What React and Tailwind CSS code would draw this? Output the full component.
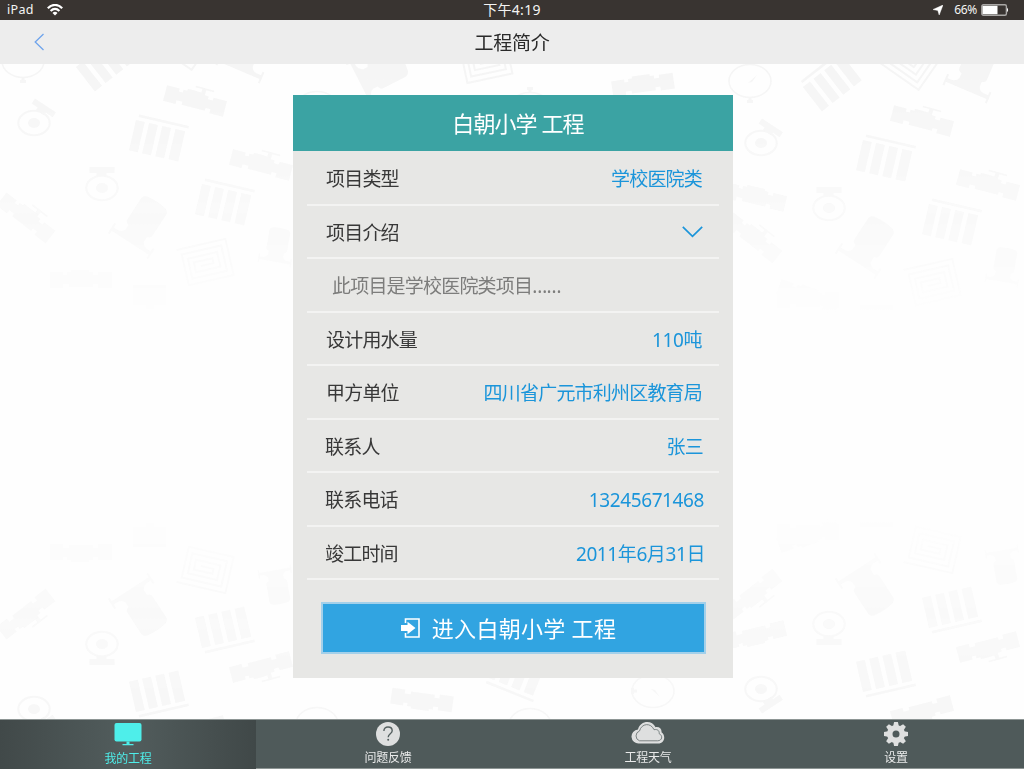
import React from "react";

const FONT = "font-['Noto_Sans','Noto_Sans_CJK_SC',sans-serif]";

/* ---------- background doodles ---------- */
const Valve = ({ t, handle = true }) => (
  <g transform={t}>
    <path d="M-31-8h13v3h4v-3h4v-2h18v2h4v3h5v-3h14v16H17v-4h-5v3H-12v-3h-6v4h-13z" />
    {handle && <path d="M-3-15h19v1.600H8v4H4v-4h-7z" />}
  </g>
);
const Bars = ({ t }) => (
  <g transform={t}>
    <path d="M-22-21h51v2.600h-51zM-24-15h9v31h-9zM-10.500-15h9v31h-9zM3-15h9v31H3zM16.500-15h10v31h-10z" />
  </g>
);
const Camera = ({ t, rot = 0 }) => (
  <g transform={t}>
    <ellipse rx="15.700" ry="12.200" fill="none" stroke="currentColor" strokeWidth="2" />
    <ellipse rx="6" ry="5" />
    <g transform={`rotate(${rot})`}>
      <path d="M-12.500-21h25v6h-8v3h-10v-3h-7z" />
    </g>
  </g>
);
const Gauge = ({ t, rot = 0 }) => (
  <g transform={t}>
    <ellipse rx="21" ry="16.500" fill="none" stroke="currentColor" strokeWidth="1.600" />
    <path d="M-2 2 7-6 2 1z" />
    <path transform={`rotate(${rot})`} d="M-1.500 16h3v3h1.500v3h-6v-3h1.500z" />
  </g>
);
const Spiral = ({ t }) => (
  <g transform={t}>
    <path
      d="M-25-18H25V19H-21V-12.500H19.500V13.500H-16V-7H14V8H-11V-2H8V3H-5"
      fill="none"
      stroke="currentColor"
      strokeWidth="2"
    />
  </g>
);
const Flask = ({ t }) => (
  <g transform={t}>
    <path d="M-15-24q1-3 4-4 11-2 22 0 3 1 4 4V2q0 3-4 4v5q1 4 6 5h5v-4h2v12h-2v-4h-44v4h-2V12h2v4h5q5-1 6-5V6q-4-1-4-4z" />
  </g>
);

function Tile() {
  return (
    <>
      <Gauge t="translate(23 61)" />
      <Bars t="translate(104 64) rotate(-38)" />
      <Spiral t="translate(182 40) rotate(35)" />
      <Flask t="translate(247 52) rotate(23)" />
      <Valve t="translate(195 101) rotate(15)" />
      <Camera t="translate(34 123)" rot={33} />
      <Bars t="translate(156 140) rotate(13)" />
      <Valve t="translate(261 165) rotate(15)" />
      <Camera t="translate(102 188)" />
      <Bars t="translate(222 204) rotate(13)" />
      <Valve t="translate(26 218) rotate(38)" />
      <Flask t="translate(141 226) rotate(33)" />
      <Spiral t="translate(205 262) rotate(-13)" />
      <Flask t="translate(277 248) rotate(10) scale(.7)" />
      <Valve t="translate(81 280)" handle={false} />
      <path d="M133 285h33v20h-12v4h-8v-4h-13z" />
    </>
  );
}

function Scene() {
  return (
    <>
      <Tile />
      <g transform="translate(727 20)">
        <Tile />
      </g>
      <Valve t="translate(755 197) rotate(13)" handle={false} />
      <Valve t="translate(808 297) rotate(20)" handle={false} />
    </>
  );
}

function Backdrop() {
  return (
    <svg
      className="absolute inset-0 h-full w-full text-[#f5f5f5]"
      viewBox="0 0 1024 769"
      fill="currentColor"
      aria-hidden="true"
    >
      <defs>
        <linearGradient id="fade" x1="0" y1="64" x2="0" y2="320" gradientUnits="userSpaceOnUse">
          <stop offset="0" stopColor="#fff" />
          <stop offset=".5" stopColor="#999" />
          <stop offset="1" stopColor="#000" />
        </linearGradient>
        <mask id="top" maskUnits="userSpaceOnUse" x="0" y="0" width="1024" height="769">
          <rect width="1024" height="769" fill="url(#fade)" />
        </mask>
      </defs>
      <g mask="url(#top)">
        <Scene />
        <Flask t="translate(378 74) rotate(63)" />
        <Spiral t="translate(484 60) rotate(-12)" />
        <Valve t="translate(643 85) rotate(-8)" handle={false} />
        <Gauge t="translate(317 108)" rot={90} />
        <Gauge t="translate(530 109)" rot={180} />
        <Gauge t="translate(653 140)" rot={90} />
        <Bars t="translate(514 164) rotate(18)" />
        <Bars t="translate(340 195) rotate(-35)" />
        <Camera t="translate(435 208)" />
        <Valve t="translate(422 130) rotate(-8)" handle={false} />
      </g>
      <g transform="translate(0 832) scale(1 -1)">
        <g mask="url(#top)">
          <Scene />
          <Valve t="translate(422 132) rotate(-8)" handle={false} />
          <Gauge t="translate(317 108)" rot={90} />
          <Gauge t="translate(530 107)" rot={180} />
          <Gauge t="translate(653 141)" rot={90} />
          <Bars t="translate(514 160) rotate(-22)" />
          <Bars t="translate(340 195) rotate(-35)" />
        </g>
      </g>
    </svg>
  );
}

/* ---------- status bar ---------- */
function StatusBar() {
  return (
    <div className="grid h-5 grid-cols-3 items-center bg-[#393431] text-[#f4f4f4]">
      <div className="flex items-center pl-[7px]">
        <span className="text-[12.500px] leading-5 tracking-[0.3px]">iPad</span>
        <svg className="ml-[13px] h-3 w-4" viewBox="0 0 16 12" fill="none" stroke="#fff" strokeWidth="2.100">
          <path d="M.8 4.300C5-.3 11-.3 15.200 4.300" />
          <path d="M3.600 7C6.400 4.200 9.600 4.200 12.400 7" />
          <path d="M8 11.400 5.500 8.900C7 7.500 9 7.500 10.500 8.900z" fill="#fff" stroke="none" />
        </svg>
      </div>
      <div className="text-center text-[14px] leading-5 tracking-[0.300px]">下午4:19</div>
      <div className="flex items-center justify-end pr-[15px]">
        <svg className="mr-[11px] h-[10px] w-[10px]" viewBox="0 0 11 11" fill="#fff">
          <path d="M11 0 6.800 11 5.300 6 0 5z" stroke="#fff" strokeWidth=".5" />
        </svg>
        <span className="text-[12px] leading-5 tracking-[-0.3px]">66%</span>
        <svg className="ml-1 h-3 w-7" viewBox="0 0 28 12">
          <rect x=".8" y=".8" width="24.600" height="10.400" rx="1.500" fill="none" stroke="#a9a7a5" strokeWidth="1.400" />
          <rect x="1.500" y="1.800" width="15" height="8.400" fill="#fff" />
          <path d="M26 3.800q2.200 2.200 0 4.400z" fill="#fff" />
        </svg>
      </div>
    </div>
  );
}

/* ---------- card ---------- */
const rows = [
  { label: "项目类型", value: "学校医院类", pad: "pl-[19px] pr-[17px]" },
  { label: "项目介绍", chevron: true, pad: "pl-[19px] pr-[16px]" },
  { note: "此项目是学校医院类项目……", pad: "pl-[25px]" },
  { label: "设计用水量", value: "110吨", pad: "pl-[19px] pr-[17px]", numeric: true },
  { label: "甲方单位", value: "四川省广元市利州区教育局", pad: "pl-[19px] pr-[17px]" },
  { label: "联系人", value: "张三", pad: "pl-[18px] pr-[16px]" },
  { label: "联系电话", value: "13245671468", pad: "pl-[18px] pr-[15px]", numeric: true },
  { label: "竣工时间", value: "2011年6月31日", pad: "pl-[18px] pr-[14px]", numeric: true },
];

function Row({ label, value, note, chevron, numeric, pad }) {
  return (
    <div
      className={`flex h-[53.450px] items-center justify-between border-b-2 border-[#f3f3f2] pt-[3px] text-[19px] tracking-[-0.800px] ${pad}`}
    >
      {note ? <span className="text-[#7d7d7c]">{note}</span> : <span className="text-[#383838]">{label}</span>}
      {value && <span className={`text-[#1b95da] ${numeric ? "tracking-[-0.400px]" : ""}`}>{value}</span>}
      {chevron && (
        <svg className="mb-[2px] h-3 w-[21px]" viewBox="0 0 21 12" fill="none" stroke="#1b95da" strokeWidth="1.700">
          <path d="M.8.8 10.500 10.300 20.200.8" />
        </svg>
      )}
    </div>
  );
}

function ProjectCard() {
  return (
    <section className="relative h-[583px] w-[440px] bg-[#e5e5e3]/92">
      <h2 className="h-14 bg-[#38a2a2]/98 pl-[10px] text-center text-[22px] leading-[57px] tracking-[-0.900px] text-white">
        白朝小学 工程
      </h2>
      <div className="mx-[14px] pt-[1.500px]">
        {rows.map((r, i) => (
          <Row key={i} {...r} />
        ))}
      </div>
      <button className="mx-auto mt-[22px] flex h-[52px] w-[385px] items-center justify-center border-2 border-[#a3d0ea] bg-[#31a4e1] pr-[9px] text-[22px] tracking-[0.300px] text-white">
        <svg className="mr-[11px] h-5 w-5" viewBox="0 0 20 20">
          <path d="M4.500 5V1H18v18H4.500v-4" fill="none" stroke="#fff" strokeWidth="1.600" />
          <path d="M0 7h6.500V3.800L14.500 10l-8 6.200V13H0z" fill="#fff" />
        </svg>
        进入白朝小学 工程
      </button>
    </section>
  );
}

/* ---------- tab bar ---------- */
const MonitorIcon = () => (
  <svg className="h-6 w-7" viewBox="0 0 28 24" fill="#4eeeea">
    <rect x=".5" y="0" width="27" height="18.500" rx="2" />
    <path d="M12.500 18.500h3V21h4v1.200h-11V21h4z" />
  </svg>
);
const HelpIcon = () => (
  <svg className="h-6 w-6" viewBox="0 0 24 24">
    <circle cx="12" cy="12" r="12" fill="#dedfdf" />
    <path
      d="M7.900 9c0-2.600 1.700-4 4.100-4s4.200 1.500 4.200 3.700c0 3.200-4 3-4 6.500"
      fill="none"
      stroke="#545f5f"
      strokeWidth="1.400"
    />
    <circle cx="12.200" cy="17.800" r="1" fill="#545f5f" />
  </svg>
);
const CloudIcon = () => (
  <svg className="mb-[2px] h-[22px] w-[34px]" viewBox="0 0 34 22">
    <path
      d="M8 21.500a7 7 0 0 1-1-14C9-1.500 21-2.500 24.500 5.200c4-.7 6.500 2 6 5C35 13 34 21.500 27 21.500z"
      fill="#dedfdf"
    />
    <path
      d="M8.500 18.800a5.200 5.200 0 0 1 0-9.800C10.500 1 20 .5 23 7.700c3.800-.8 5.500 1.300 5.200 4 4 2 3 7.100-1.700 7.100z"
      fill="none"
      stroke="#6f7878"
      strokeWidth=".9"
    />
  </svg>
);
const GearIcon = () => (
  <svg className="h-6 w-6" viewBox="-12 -12 24 24" fill="#dedfdf">
    <circle r="6.300" fill="none" stroke="#dedfdf" strokeWidth="5.600" />
    {[0, 45, 90, 135, 180, 225, 270, 315].map((a) => (
      <path key={a} transform={`rotate(${a})`} d="M-2.800-8l.9-4h3.800l.9 4z" />
    ))}
  </svg>
);

const tabs = [
  {
    label: "我的工程",
    icon: <MonitorIcon />,
    cls: "pt-[3px] bg-linear-to-r from-[#414949] via-[#525d5d] to-[#404848] text-[#4eeeea]",
  },
  { label: "问题反馈", icon: <HelpIcon />, cls: "pt-[2px] text-[#e9eaea]" },
  { label: "工程天气", icon: <CloudIcon />, cls: "pt-[2px] text-[#e9eaea]" },
  { label: "设置", icon: <GearIcon />, cls: "pt-[2px] pr-2 text-[#e9eaea]" },
];

function TabBar() {
  return (
    <nav className="grid h-[50px] grid-cols-[256px_264px_256px_1fr] border-y border-[#8d9594] bg-[#4f5a5a]">
      {tabs.map((t) => (
        <div key={t.label} className={`flex flex-col items-center ${t.cls}`}>
          <span className="flex h-6 items-center">{t.icon}</span>
          <span className="text-[12px] leading-[23px] tracking-[-0.300px]">{t.label}</span>
        </div>
      ))}
    </nav>
  );
}

export default function App() {
  return (
    <div className={`relative flex h-[769px] w-[1024px] flex-col overflow-hidden bg-[#fefefe] ${FONT}`}>
      <Backdrop />
      <div className="relative flex flex-1 flex-col">
        <StatusBar />
        <header className="grid h-11 grid-cols-[1fr_auto_1fr] items-center bg-[#ededed]">
          <svg className="ml-[34px] h-[18px] w-[11px]" viewBox="0 0 11 18" fill="none" stroke="#6fa4ec" strokeWidth="1.300">
            <path d="M9.500 1 1.200 9l8.300 8" />
          </svg>
          <h1 className="pt-[2px] text-[19px] tracking-[-0.300px] text-[#2a2a2a]">工程简介</h1>
          <span />
        </header>
        <main className="flex flex-1 justify-center pt-[31px] pl-[2px]">
          <ProjectCard />
        </main>
        <TabBar />
      </div>
    </div>
  );
}
